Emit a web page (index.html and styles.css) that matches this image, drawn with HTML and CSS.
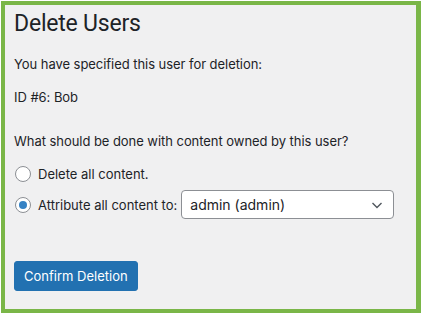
FILE: index.html
```html
<!DOCTYPE html>
<html lang="en">
<head>
    <meta charset="UTF-8">
    <title>Delete Users</title>
    <link rel="stylesheet" href="styles.css">
</head>
<body>
    <div class="frame">
        <h1>Delete Users</h1>
        <p>You have specified this user for deletion:</p>
        <p class="user-id">ID #6: Bob</p>

        <fieldset class="choices">
            <p class="legend">What should be done with content owned by this user?</p>
            <label class="choice">
                <input type="radio" name="delete_option" value="delete">
                <span>Delete all content.</span>
            </label>
            <label class="choice">
                <input type="radio" name="delete_option" value="reassign" checked>
                <span>Attribute all content to:</span>
                <span class="select">
                    admin (admin)
                    <svg width="16" height="16" viewBox="0 0 16 16"><path d="M3.5 6 L8 10.5 L12.5 6" fill="none" stroke="#50575e" stroke-width="1.4"/></svg>
                </span>
            </label>
        </fieldset>

        <button class="button-primary">Confirm Deletion</button>
    </div>
</body>
</html>
```

FILE: styles.css
```css
:root {
    --green: #7ab648;
    --bg: #f0f0f1;
    --text: #1d2327;
    --blue: #2271b1;
    --radio-blue: #3582c4;
    --field-border: #8c8f94;
}

* {
    margin: 0;
    padding: 0;
    box-sizing: border-box;
}

body {
    background: #ffffff;
    font-family: Inter, Roboto, "Liberation Sans", sans-serif;
    font-size: 13px;
    line-height: 1.4;
    color: var(--text);
}

.frame {
    margin: 1px 0 0 1px;
    width: 420px;
    height: 312px;
    background: var(--bg);
    border: 4px solid var(--green);
    border-right-width: 5px;
    padding: 4px 9px 0 9px;
    display: flex;
    flex-direction: column;
    align-items: flex-start;
}

h1 {
    font-family: Roboto, Inter, sans-serif;
    font-size: 23px;
    font-weight: 400;
    letter-spacing: -0.2px;
    line-height: 1.3;
    margin-bottom: 16px;
}

p {
    letter-spacing: -0.05px;
    margin-bottom: 15px;
}

.user-id {
    margin-bottom: 26px;
}

.choices {
    border: none;
    display: flex;
    flex-direction: column;
    gap: 10px;
}

.choices .legend {
    margin-bottom: 3px;
}

.choice {
    display: flex;
    align-items: center;
    gap: 7px;
    height: 21px;
}

.choice input[type="radio"] {
    appearance: none;
    width: 16px;
    height: 16px;
    margin-left: 1px;
    border: 1px solid var(--field-border);
    border-radius: 50%;
    background: #ffffff;
    display: grid;
    place-items: center;
}

.choice input[type="radio"]:checked::before {
    content: "";
    width: 8px;
    height: 8px;
    border-radius: 50%;
    background: var(--radio-blue);
}

.select {
    margin-left: -3px;
    width: 213px;
    height: 29px;
    border: 1px solid var(--field-border);
    border-radius: 4px;
    background: #ffffff;
    font-size: 14px;
    display: flex;
    align-items: center;
    justify-content: space-between;
    padding: 0 8px 0 8px;
}

.button-primary {
    margin-top: 46px;
    background: var(--blue);
    color: #ffffff;
    border: 1px solid var(--blue);
    border-radius: 3px;
    font-family: inherit;
    font-size: 13px;
    height: 30px;
    padding: 0 9px;
}
```
